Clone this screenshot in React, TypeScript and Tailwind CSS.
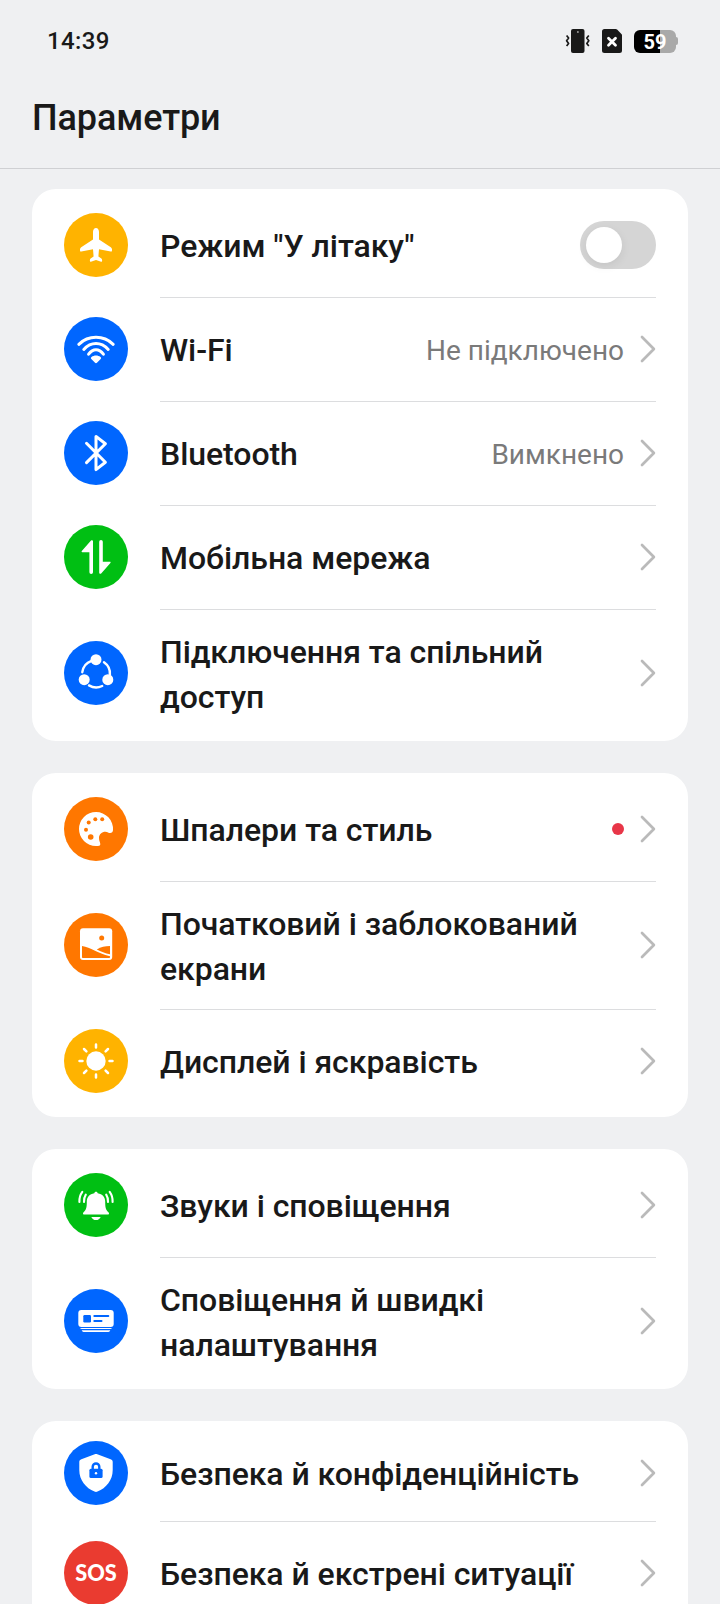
import React from "react";

const AirplaneIcon = () => (
  <path
    fill="#fff"
    d="M32 15c-1.9 0-3 1.7-3 4v7.4L17.2 34.2c-.8.5-1.2 1.2-1.2 2.2v1.2c0 .8.5 1.2 1.3 1L29 36.2l.6 7.2-3 2.2c-.5.4-.7.9-.7 1.5v.9c0 .6.4.9 1 .7l5.1-1.8 5.1 1.8c.6.2 1-.1 1-.7v-.9c0-.6-.2-1.1-.7-1.5l-3-2.2.6-7.2 11.7 2.4c.8.2 1.3-.2 1.3-1v-1.2c0-1-.4-1.7-1.2-2.2L35 26.400V19c0-2.300-1.100-4-3-4z"
  />
);

const WifiIcon = () => (
  <>
    <g fill="none" stroke="#fff" strokeWidth="3" strokeLinecap="round">
      <path d="M14.800 27.300C24.500 18 39.500 18 49.200 27.300" />
      <path d="M19.800 32.400C27 24.500 37 24.500 44.200 32.400" />
      <path d="M24.600 37.200C29 31.300 35 31.300 39.400 37.200" />
    </g>
    <path fill="#fff" d="M32 46.200c-.5 0-.8-.2-1.200-.6l-3.500-3.600c-.6-.6-.5-1.400.2-1.900 2.600-2 6.400-2 9 0 .7.5.8 1.300.2 1.900l-3.500 3.600c-.4.400-.7.600-1.200.6z" />
  </>
);

const BluetoothIcon = () => (
  <path
    fill="none"
    stroke="#fff"
    strokeWidth="3"
    strokeLinejoin="round"
    strokeLinecap="round"
    d="M22.500 22.300L41.400 41.300 32 48.600V15.400L41.400 22.800 22.500 41.600"
  />
);

const MobileDataIcon = () => (
  <path
    fill="#fff"
    d="M29 16.300V47.200a1.800 1.800 0 0 1-3.600 0V27.200H18.300c-.7 0-1-.7-.5-1.200L26.800 15.700c.8-.9 2.200-.5 2.200.6zM35.200 47.700V16.800a1.800 1.800 0 0 1 3.600 0V36.800H45.900c.7 0 1 .7.5 1.200L37.400 48.300c-.8.9-2.200.5-2.200-.6z"
  />
);

const ShareIcon = () => (
  <>
    <circle cx="32" cy="18.700" r="5.500" fill="#fff" />
    <circle cx="20.200" cy="38.700" r="5.500" fill="#fff" />
    <circle cx="43.800" cy="38.700" r="5.500" fill="#fff" />
    <g fill="none" stroke="#fff" strokeWidth="2.400" strokeLinecap="round">
      <path d="M18.300 31.200A14 14 0 0 1 27.500 19.800" />
      <path d="M40 21.200A14 14 0 0 1 45.900 34" />
      <path d="M25 44.400A14 14 0 0 0 38.200 45" />
    </g>
  </>
);

const PaletteIcon = () => (
  <>
    <path
      fill="#fff"
      d="M32 15A17 17 0 1 0 32 49C34.800 49 36.300 48.700 36.300 47.200 36.300 45.200 35 44 35 41 35 36 40.500 33.300 44.500 35.700 46.800 36.400 49 35.800 49 33A17 17 0 0 0 32 15z"
    />
    <g fill="#ff7700">
      <circle cx="22" cy="32.700" r="2" />
      <circle cx="24.700" cy="25.600" r="2" />
      <circle cx="31.300" cy="22.300" r="2" />
      <circle cx="38.200" cy="22.300" r="2" />
      <circle cx="26.700" cy="40" r="2.800" />
    </g>
  </>
);

const PictureIcon = () => (
  <>
    <rect x="16" y="15.300" width="32.200" height="31.700" rx="3" fill="#fff" />
    <g fill="#ff7700">
      <circle cx="37.700" cy="24.900" r="2.500" />
      <path d="M18 33C27 34.500 33 39.800 46 43.300V44.300Q46 45 45.300 45H18.700Q18 45 18 44.300z" />
      <path d="M32.800 36.400C37 34 41 33 46 33V41.300C41 40 37 38.500 32.800 36.400z" />
    </g>
  </>
);

const SunIcon = () => (
  <>
    <circle cx="32" cy="32" r="9.700" fill="#fff" />
    <path
      stroke="#fff"
      strokeWidth="2.500"
      strokeLinecap="round"
      d="M32 15.500v3M32 45.500v3M15.500 32h3M45.500 32h3M20 20l2.400 2.400M41.600 41.600l2.400 2.400M44 20l-2.400 2.400M22.400 41.600l-2.400 2.400"
    />
  </>
);

const BellIcon = () => (
  <>
    <path
      fill="#fff"
      d="M32 18.700c1 0 1.600.7 1.700 1.600 4.800.7 7.500 4 7.500 8.500 0 5.200.4 7.900 3.200 10.400.4.400.6.700.6 1.300 0 .7-.4 1.100-1.100 1.100H20.100c-.7 0-1.100-.4-1.100-1.100 0-.6.2-.9.6-1.300 2.800-2.500 3.200-5.200 3.200-10.400 0-4.500 2.700-7.800 7.500-8.500.1-.9.700-1.600 1.700-1.600zM27.300 43.900h9.400c-.9 2-2.600 3.100-4.700 3.100s-3.800-1.100-4.700-3.100z"
    />
    <g fill="none" stroke="#fff" strokeWidth="2.100" strokeLinecap="round">
      <path d="M18.300 18.900C16.100 22 15.200 25.500 15.400 29" />
      <path d="M21.800 21.600C20.300 24 19.800 26.500 20 29" />
      <path d="M45.700 18.900C47.900 22 48.800 25.500 48.600 29" />
      <path d="M42.200 21.600C43.700 24 44.200 26.500 44 29" />
    </g>
  </>
);

const PanelIcon = () => (
  <>
    <rect x="14.300" y="21" width="35.400" height="17" rx="3" fill="#fff" />
    <rect x="19.300" y="26" width="7.700" height="7.400" rx="1.200" fill="#0066ff" />
    <path stroke="#0066ff" strokeWidth="2" strokeLinecap="round" d="M30.300 27h14M30.300 32h7.200" />
    <path fill="#fff" d="M16 38.900h32q-.6 1.100-2 1.100H18q-1.400 0-2-1.100zM17.700 41.200h28.600q-.5 1.800-1.900 1.800H19.600q-1.400 0-1.900-1.800z" />
  </>
);

const ShieldIcon = () => (
  <>
    <path
      fill="#fff"
      d="M30.700 13.300c.9-.3 1.700-.3 2.600 0L46.600 18.200c1.400.5 2.100 1.400 2.100 2.800V29c0 10.200-6.500 18-15.200 21.600-1 .4-2 .4-3 0C21.800 47 15.300 39.200 15.300 29V21c0-1.400.7-2.300 2.100-2.800z"
    />
    <rect x="25.400" y="27.800" width="13.200" height="9.200" rx="1.500" fill="#0066ff" />
    <path d="M28.700 28.500V25.800a3.300 3.300 0 0 1 6.600 0v2.700" fill="none" stroke="#0066ff" strokeWidth="2.400" />
    <circle cx="32" cy="32.300" r="1.200" fill="#fff" />
  </>
);

const SosIcon = () => (
  <text
    x="32"
    y="40.200"
    textAnchor="middle"
    fill="#fff"
    fontSize="22"
    fontWeight="900"
    fontFamily="Lato, sans-serif"
    textLength="41.500"
    lengthAdjust="spacingAndGlyphs"
  >
    SOS
  </text>
);

const Chevron = () => (
  <svg className="w-4 h-7 shrink-0" viewBox="0 0 16 28" fill="none">
    <path
      d="M2 2L13.900 14 2 26"
      stroke="#bababa"
      strokeWidth="2.700"
      strokeLinecap="round"
      strokeLinejoin="round"
    />
  </svg>
);

const Toggle = () => (
  <div className="w-[76px] h-12 rounded-full bg-[#d5d5d5] p-1.5 shrink-0">
    <div className="size-9 rounded-full bg-white shadow-[0_3px_10px_rgba(0,0,0,0.08)]" />
  </div>
);

type Item = {
  label: string;
  color: string;
  icon: React.ReactNode;
  value?: string;
  toggle?: boolean;
  dot?: boolean;
  height?: string;
};

const groups: Item[][] = [
  [
    { label: 'Режим "У літаку"', color: "bg-[#ffb300]", icon: <AirplaneIcon />, toggle: true },
    { label: "Wi-Fi", color: "bg-[#0066ff]", icon: <WifiIcon />, value: "Не підключено" },
    { label: "Bluetooth", color: "bg-[#0066ff]", icon: <BluetoothIcon />, value: "Вимкнено" },
    { label: "Мобільна мережа", color: "bg-[#00bf13]", icon: <MobileDataIcon /> },
    {
      label: "Підключення та спільний доступ",
      color: "bg-[#0066ff]",
      icon: <ShareIcon />,
      height: "h-32",
    },
  ],
  [
    { label: "Шпалери та стиль", color: "bg-[#ff7700]", icon: <PaletteIcon />, dot: true },
    {
      label: "Початковий і заблокований екрани",
      color: "bg-[#ff7700]",
      icon: <PictureIcon />,
      height: "h-32",
    },
    { label: "Дисплей і яскравість", color: "bg-[#ffb300]", icon: <SunIcon /> },
  ],
  [
    { label: "Звуки і сповіщення", color: "bg-[#00bf13]", icon: <BellIcon /> },
    {
      label: "Сповіщення й швидкі налаштування",
      color: "bg-[#0066ff]",
      icon: <PanelIcon />,
      height: "h-32",
    },
  ],
  [
    {
      label: "Безпека й конфіденційність",
      color: "bg-[#0066ff]",
      icon: <ShieldIcon />,
      height: "h-24",
    },
    { label: "Безпека й екстрені ситуації", color: "bg-[#ea3b30]", icon: <SosIcon /> },
  ],
];

const Row = ({ item, first }: { item: Item; first: boolean }) => (
  <div className={`flex items-center gap-8 px-8 ${item.height || "h-[104px]"}`}>
    <div className={`size-16 rounded-full shrink-0 ${item.color}`}>
      <svg className="size-16" viewBox="0 0 64 64" fill="none">
        {item.icon}
      </svg>
    </div>
    <div
      className={`flex flex-1 items-center h-full ${
        first ? "" : "shadow-[inset_0_1px_0_#dcdddf]"
      }`}
    >
      <div className="flex-1 pt-[3px] pr-4 text-[32px] leading-[45px] font-medium tracking-[-0.06px] text-[#191919]">
        {item.label}
      </div>
      {item.value && (
        <div className="pt-[3px] mr-4 text-[28px] leading-9 text-[#7a7a7a]">{item.value}</div>
      )}
      {item.dot && <div className="size-3 rounded-full bg-[#e83648] mr-4" />}
      {item.toggle ? <Toggle /> : <Chevron />}
    </div>
  </div>
);

const StatusBar = () => (
  <div className="flex items-center justify-between h-[82px] pl-[47px] pr-[42px]">
    <div className="text-[24px] leading-7 font-medium tracking-[0.4px]">14:39</div>
    <div className="flex items-center">
      {/* Vibrate */}
      <svg className="w-[26px] h-6 mr-[11px]" viewBox="0 0 26 24" fill="none">
        <rect x="6" y="0" width="13.500" height="24" rx="2" fill="#191919" />
        <circle cx="12.900" cy="3" r="1" fill="#9a9a9a" />
        <path
          d="M1.600 6.500L3.600 9 1.600 11.800 3.600 14.500 1.600 17M23.800 6.500L21.800 9 23.800 11.800 21.800 14.500 23.800 17"
          stroke="#191919"
          strokeWidth="1.700"
          strokeLinejoin="round"
        />
      </svg>
      {/* No SIM */}
      <svg className="w-5 h-6 mr-3" viewBox="0 0 20 24" fill="none">
        <path
          d="M2.500 0H13.700c.6 0 1 .2 1.400.6L19.400 4.900c.4.400.6.800.6 1.400V21.500A2.500 2.500 0 0 1 17.500 24h-15A2.500 2.500 0 0 1 0 21.500v-19A2.500 2.500 0 0 1 2.500 0z"
          fill="#191919"
        />
        <path d="M6.500 9.200l7 7M13.500 9.200l-7 7" stroke="#fff" strokeWidth="2.800" strokeLinecap="round" />
      </svg>
      {/* Battery */}
      <div className="flex items-center">
        <div className="flex items-center justify-center w-[42px] h-[23px] pt-px rounded-[6px] bg-linear-to-r from-black from-[62%] to-[#a9a9a9] to-[62%] text-[20px] leading-none font-bold text-white">
          59
        </div>
        <div className="w-0.5 h-2 rounded-r-sm bg-[#a9a9a9]" />
      </div>
    </div>
  </div>
);

const App = () => {
  return (
    <div className="w-[720px] h-[1604px] overflow-hidden bg-[#eff0f2] text-[#191919] font-['Roboto','Noto_Sans',sans-serif]">
      <StatusBar />
      <div className="h-[87px] px-8 pt-3.5 border-b border-[#cfd0d3]">
        <h1 className="text-[36px] leading-[44px] font-medium tracking-[-0.1px]">Параметри</h1>
      </div>
      <div className="flex flex-col gap-8 px-8 pt-5">
        {groups.map((items, index) => (
          <div key={index} className="py-1 rounded-3xl bg-white">
            {items.map((item, i) => (
              <Row key={item.label} item={item} first={i === 0} />
            ))}
          </div>
        ))}
      </div>
    </div>
  );
};

export default App;
